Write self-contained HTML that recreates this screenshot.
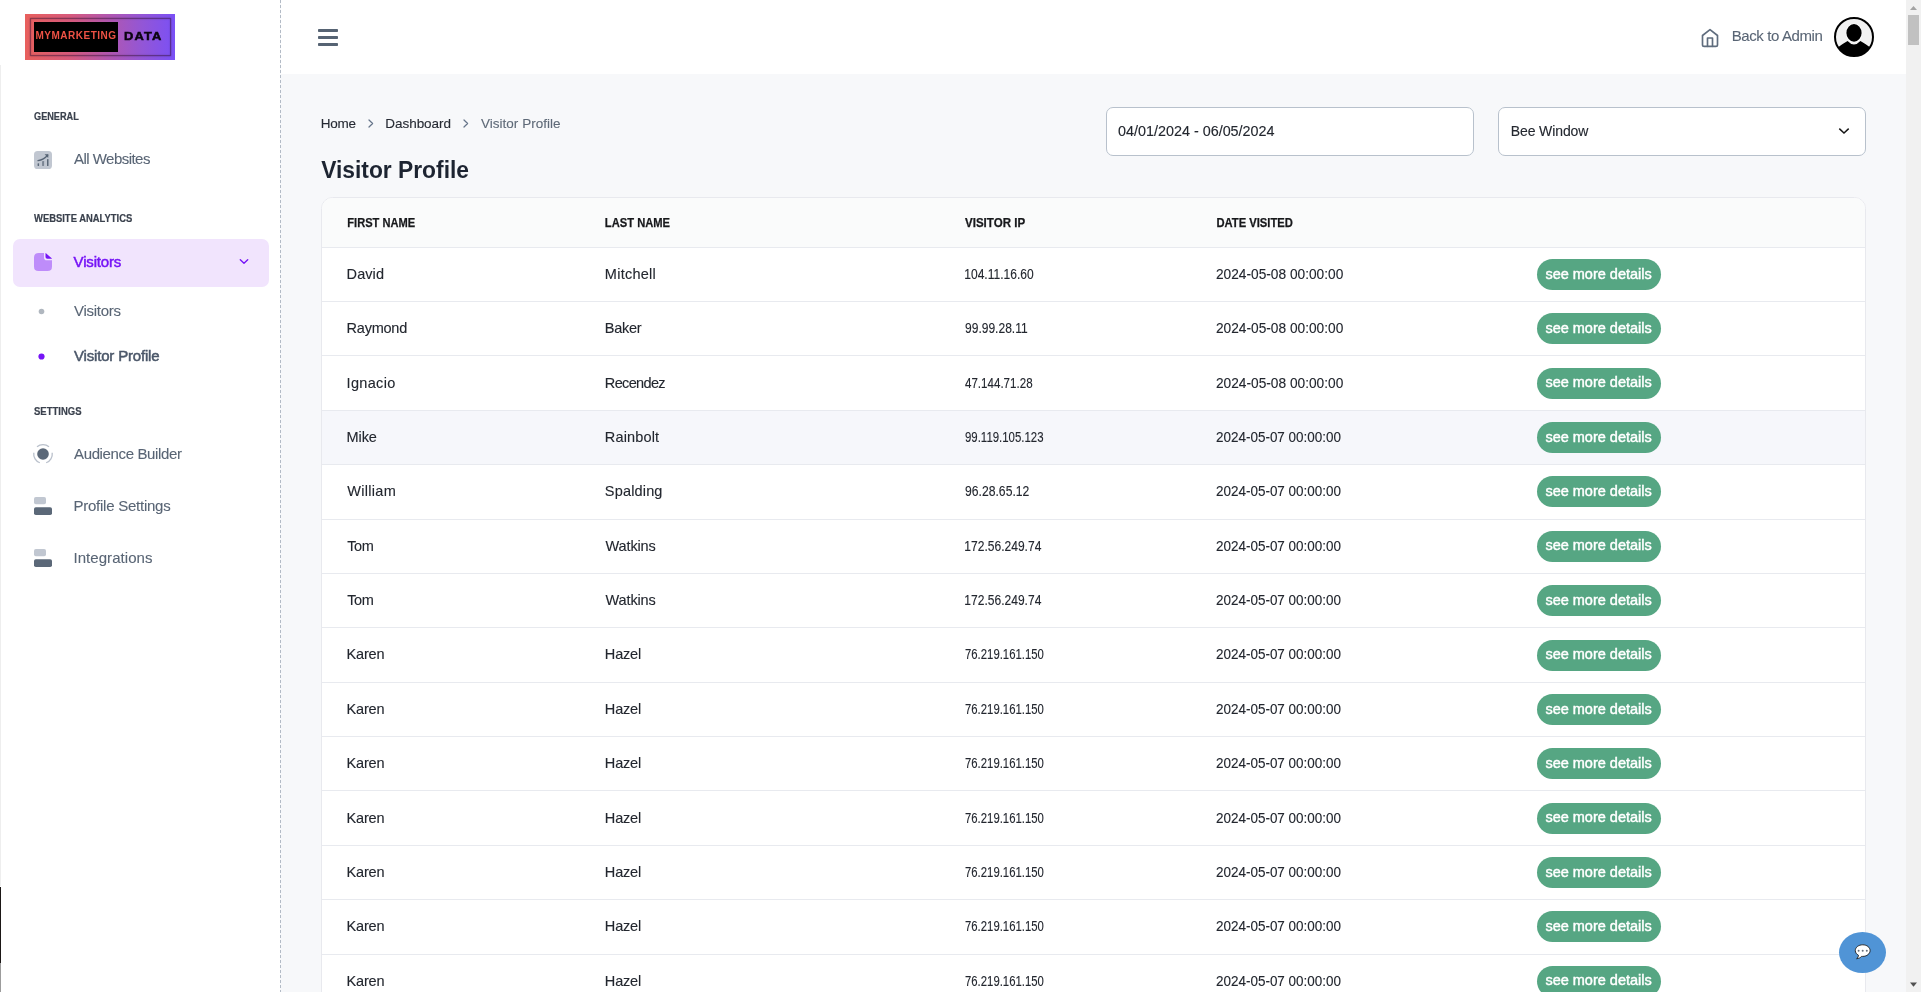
<!DOCTYPE html>
<html lang="en">
<head>
<meta charset="utf-8">
<title>Visitor Profile</title>
<style>
*{box-sizing:border-box;margin:0;padding:0}
html,body{width:1921px;height:992px;overflow:hidden}
body{position:relative;will-change:transform;background:#f7f8fa;font-family:"Liberation Sans",sans-serif;font-size:15px;color:#212529}
span{white-space:nowrap}
.t{display:inline-block;transform-origin:0 50%}
td .t{position:relative;top:-.3px}
.edge{position:absolute;left:0;top:0;width:1px;height:992px;background:linear-gradient(#fff 0,#fff 65px,#eee 65px,#eee 886px,#fff 886px,#fff 887px,#1b1716 887px,#1b1716 963px,#9c9c9c 963px)}
aside{position:absolute;left:1px;top:0;width:279px;height:992px;background:#fff}
.dash{position:absolute;left:280px;top:0;width:1px;height:992px;background:repeating-linear-gradient(#b3bbc6 0,#b3bbc6 3px,transparent 3px,transparent 5px)}
aside .abs,header .abs,main .abs,.abs{position:absolute;line-height:1;display:block}
.logo{position:absolute;left:24px;top:14px;width:150px;height:46px;background:linear-gradient(90deg,#e8605d 0%,#d75a7c 30%,#b257ae 55%,#9356d6 78%,#7a50f6 100%)}
.logo i{position:absolute;left:4.5px;top:4px;right:4.5px;bottom:4px;border:1px solid rgba(50,15,50,.5);box-shadow:0 0 1.5px rgba(50,15,50,.55),inset 0 0 1.5px rgba(50,15,50,.4);display:block}
.logo b{position:absolute;left:9px;top:8px;width:84px;height:30px;background:#000;display:block}
.logo .l1{position:absolute;color:#ee5245;line-height:1;font-weight:700;left:10.5px;top:17.4px;font-size:10px;letter-spacing:.5px}
.logo .l2{position:absolute;color:#0b0410;line-height:1;font-weight:700;left:99px;top:16.5px;font-size:11.5px;letter-spacing:1px;transform:scaleX(1.12);transform-origin:0 50%;-webkit-text-stroke:.5px}
.sec{font-size:11px;font-weight:700;color:#3a414d;-webkit-text-stroke:.2px}
.nav{font-size:15px;color:#596575;-webkit-text-stroke:.1px}
.nav.b{font-weight:400;color:#4b5769;-webkit-text-stroke:.5px}
.nav.act{font-weight:400;color:#7614f6;-webkit-text-stroke:.5px}
.active{position:absolute;left:12px;top:239px;width:256px;height:48px;border-radius:7px;background:#f1e4fd}
svg{display:block;position:absolute;overflow:visible}
header{position:absolute;left:281px;top:0;width:1625px;height:74px;background:#fff}
.hb{color:#596575;font-size:15px;-webkit-text-stroke:.1px}
main{position:absolute;left:281px;top:74px;width:1625px;height:918px}
.bc{font-size:13.5px;color:#262a33;-webkit-text-stroke:.12px}
.bc.m{color:#5e6977;-webkit-text-stroke:.1px}
h1{position:absolute;font-size:23.5px;font-weight:700;color:#1d2431;line-height:1;white-space:nowrap}
.inp{position:absolute;top:33px;width:368px;height:49px;border:1px solid #b8c1cc;border-radius:7px;background:#fff;font-size:14px;color:#23272f;-webkit-text-stroke:.12px}
.inp span{position:absolute;line-height:1}
.card{position:absolute;left:40px;top:123px;width:1545px;height:900px;border:1px solid #e8e9ee;border-radius:11.5px 11.5px 0 0;background:#fff;overflow:hidden}
table{border-collapse:separate;border-spacing:0;width:100%;table-layout:fixed}
th{height:49.7px;padding:0 0 0 25px;text-align:left;font-size:12.4px;font-weight:700;color:#17181b;-webkit-text-stroke:.25px;background:#fafbfb;border-bottom:1px solid #e8eaef;vertical-align:middle;line-height:1}

td{padding:11.2px 0 11.2px 25px;font-size:14.5px;color:#23272f;-webkit-text-stroke:.12px;border-bottom:1px solid #e8eaef;vertical-align:middle;line-height:1}

tr.hov td{background:#f6f7fb}
.btn{-webkit-text-stroke:.45px;display:block;position:relative;width:124px;height:31px;border-radius:16px;background:#56a683;color:#fff;font-size:14.5px;font-weight:400;text-align:center;line-height:31px}
.sb{position:absolute;left:1906px;top:0;width:15px;height:992px;background:#f1f1f1}
.sb .th{position:absolute;left:2px;top:15px;width:11px;height:30px;background:#c1c1c1}
.chat{position:absolute;left:1839px;top:932px;width:47px;height:41px;border-radius:50%;background:#5094d6}
</style>
</head>
<body>
<div class="edge"></div>
<aside>
<div class="logo"><i></i><b></b><span class="l1">MYMARKETING</span><span class="l2">DATA</span></div>
<span class="abs sec" style="left:33px;top:110px"><span id="t-s-gen" class="t" style="transform:translate(0.00px,1px) scaleX(0.8336)">GENERAL</span></span>
<svg style="left:33px;top:151px" width="18" height="18" viewBox="0 0 18 18"><rect width="18" height="18" rx="3.6" fill="#64748b" opacity=".4"/><rect x="3.6" y="12.2" width="1.5" height="2.8" rx=".6" fill="#5b6878"/><rect x="8.1" y="10" width="2" height="5" rx=".4" fill="#5b6878" opacity=".7"/><rect x="13" y="8" width="1.5" height="7" rx=".6" fill="#5b6878"/><path d="M4 9.6 C7.5 9 11 7.2 13.6 4.2" fill="none" stroke="#566374" stroke-width="1.3" stroke-linecap="round"/><path d="M10.6 3.3 L14.4 3.3 L14.2 7 Z" fill="#566374"/></svg>
<span class="abs nav" style="left:73px;top:152px"><span id="t-n-all" class="t" style="letter-spacing:-0.53px;transform:translate(0.00px,-1px)">All Websites</span></span>
<span class="abs sec" style="left:33px;top:212px"><span id="t-s-web" class="t" style="transform:translate(0.00px,1px) scaleX(0.8563)">WEBSITE ANALYTICS</span></span>
<div class="active"></div>
<svg style="left:33px;top:253px" width="18" height="18" viewBox="0 0 18 18"><path d="M4.6 0 H10 V4.4 Q10 7.2 12.8 7.2 H18 V13.4 Q18 18 13.4 18 H4.6 Q0 18 0 13.4 V4.6 Q0 0 4.6 0 Z" fill="#7614f6" opacity=".42"/><path d="M11.5 0.5 Q11.5 0 12 0.35 L17.7 5.3 Q18.1 5.8 17.5 5.8 H13.3 Q11.5 5.8 11.5 4 Z" fill="#7614f6"/></svg>
<span class="abs nav act" style="left:73px;top:255px"><span id="t-n-vis" class="t" style="letter-spacing:-0.16px;transform:translate(-0.42px,-1px)">Visitors</span></span>
<svg style="left:238px;top:258px" width="10" height="7" viewBox="0 0 10 7"><path d="M1.3 1.8 L5 5.2 L8.7 1.8" fill="none" stroke="#7614f6" stroke-width="1.4" stroke-linecap="round" stroke-linejoin="round"/></svg>
<svg style="left:36px;top:307px" width="9" height="9" viewBox="0 0 9 9"><circle cx="4.5" cy="4.5" r="2.8" fill="#b0b7bf"/></svg>
<span class="abs nav" style="left:73px;top:304px"><span id="t-n-vis2" class="t" style="letter-spacing:-0.27px;transform:translate(0.00px,-1px)">Visitors</span></span>
<svg style="left:36px;top:352px" width="9" height="9" viewBox="0 0 9 9"><circle cx="4.5" cy="4.5" r="3.1" fill="#7614f6"/></svg>
<span class="abs nav b" style="left:73px;top:349px"><span id="t-n-vp" class="t" style="letter-spacing:-0.18px;transform:translate(0.00px,-1px)">Visitor Profile</span></span>
<span class="abs sec" style="left:33px;top:405px"><span id="t-s-set" class="t" style="transform:translate(0.00px,1px) scaleX(0.8637)">SETTINGS</span></span>
<svg style="left:31px;top:443px" width="22" height="22" viewBox="-11 -11 22 22"><circle r="5.8" fill="#5b6878"/><g fill="none" stroke="#64748b" stroke-opacity=".45" stroke-width="1.3"><path d="M-5.98 -7.13 A9.3 9.3 0 0 1 5.98 -7.13"/><path d="M9.22 -1.21 A9.3 9.3 0 0 1 3.18 8.74"/><path d="M-3.18 8.74 A9.3 9.3 0 0 1 -9.22 -1.21"/></g></svg>
<span class="abs nav" style="left:73px;top:447px"><span id="t-n-aud" class="t" style="letter-spacing:-0.36px;transform:translate(0.00px,-1px)">Audience Builder</span></span>
<svg style="left:33px;top:497px" width="18" height="18" viewBox="0 0 18 18"><rect width="12" height="7.3" rx="1.8" fill="#64748b" opacity=".4"/><rect y="10.2" width="18" height="7.8" rx="1.8" fill="#5b6878"/></svg>
<span class="abs nav" style="left:73px;top:499px"><span id="t-n-prof" class="t" style="letter-spacing:-0.24px;transform:translate(-0.56px,-1px)">Profile Settings</span></span>
<svg style="left:33px;top:549px" width="18" height="18" viewBox="0 0 18 18"><rect width="12" height="7.3" rx="1.8" fill="#64748b" opacity=".4"/><rect y="10.2" width="18" height="7.8" rx="1.8" fill="#5b6878"/></svg>
<span class="abs nav" style="left:73px;top:551px"><span id="t-n-int" class="t" style="letter-spacing:0.06px;transform:translate(-0.56px,-1px)">Integrations</span></span>
</aside>
<div class="dash"></div>

<header>
<svg style="left:37px;top:29px" width="20" height="17" viewBox="0 0 20 17"><g fill="#566373"><rect y="0" width="20" height="3" rx=".8"/><rect y="7" width="20" height="3" rx=".8"/><rect y="14" width="20" height="3" rx=".8"/></g></svg>
<svg style="left:1419px;top:28px" width="20" height="20" viewBox="0 0 24 24" fill="none" stroke="#5f6c7d" stroke-width="2" stroke-linecap="round" stroke-linejoin="round"><path d="M3 9 L12 2 L21 9 V20 a2 2 0 0 1 -2 2 H5 a2 2 0 0 1 -2 -2 Z"/><path d="M9 22 V12 h6 V22"/></svg>
<span class="abs hb" style="left:1451px;top:29px"><span id="t-h-back" class="t" style="letter-spacing:-0.40px;transform:translate(-0.28px,-1px)">Back to Admin</span></span>
<svg style="left:1553px;top:17px" width="40" height="40" viewBox="0 0 40 40"><defs><clipPath id="av"><circle cx="20" cy="20" r="19"/></clipPath></defs><circle cx="20" cy="20" r="19" fill="#f2f2f2"/><g clip-path="url(#av)"><path d="M3 31 Q9 26.5 13.6 24 Q20 31 26.4 24 Q31 26.5 37 31 V40 H3 Z" fill="#000"/><ellipse cx="20" cy="16" rx="8.4" ry="9.6" fill="#fff"/><ellipse cx="20" cy="15.9" rx="7.6" ry="8.8" fill="#000"/></g><circle cx="20" cy="20" r="19" fill="none" stroke="#000" stroke-width="2"/></svg>
</header>

<main>
<span class="abs bc" style="left:40px;top:42px"><span id="t-b-home" class="t" style="letter-spacing:-0.27px;transform:translate(-0.28px,1px)">Home</span></span>
<svg style="left:87px;top:45px" width="6" height="9" viewBox="0 0 6 9"><path d="M1 1 L4.6 4.5 L1 8" fill="none" stroke="#66758a" stroke-width="1.25" stroke-linecap="round" stroke-linejoin="round"/></svg>
<span class="abs bc" style="left:105px;top:42px"><span id="t-b-dash" class="t" style="letter-spacing:-0.04px;transform:translate(-0.70px,1px)">Dashboard</span></span>
<svg style="left:182px;top:45px" width="6" height="9" viewBox="0 0 6 9"><path d="M1 1 L4.6 4.5 L1 8" fill="none" stroke="#66758a" stroke-width="1.25" stroke-linecap="round" stroke-linejoin="round"/></svg>
<span class="abs bc m" style="left:199px;top:42px"><span id="t-b-vp" class="t" style="letter-spacing:0.02px;transform:translate(0.98px,1px)">Visitor Profile</span></span>
<h1 style="left:40px;top:83px"><span id="t-title" class="t" style="transform:translate(0.14px,2px) scaleX(0.9704)">Visitor Profile</span></h1>
<div class="inp" style="left:825px"><span style="left:12px;top:17px"><span id="t-i-date" class="t" style="transform:translate(-0.98px,-1px) scaleX(1.0259)">04/01/2024 - 06/05/2024</span></span></div>
<div class="inp" style="left:1217px"><span style="left:12px;top:17px"><span id="t-i-sel" class="t" style="letter-spacing:-0.10px;transform:translate(-0.28px,-1px)">Bee Window</span></span><svg style="left:339px;top:19px" width="12" height="8" viewBox="0 0 12 8"><path d="M1.3 1.6 L6 6 L10.7 1.6" fill="none" stroke="#151515" stroke-width="1.45" stroke-linecap="butt" stroke-linejoin="miter"/></svg></div>

<section class="card">
<table>
<colgroup><col style="width:258px"><col style="width:360px"><col style="width:251px"><col style="width:321px"><col></colgroup>
<thead><tr><th><span id="t-th0" class="t" style="transform:translate(0.28px,1px) scaleX(0.8952)">FIRST NAME</span></th><th><span id="t-th1" class="t" style="transform:translate(-0.14px,1px) scaleX(0.9023)">LAST NAME</span></th><th><span id="t-th2" class="t" style="transform:translate(0.00px,1px) scaleX(0.9316)">VISITOR IP</span></th><th><span id="t-th3" class="t" style="transform:translate(0.42px,1px) scaleX(0.9056)">DATE VISITED</span></th><th></th></tr></thead>
<tbody>
<tr><td><span id="t-fn0" class="t" style="letter-spacing:0.08px;transform:translate(-0.42px,0px)">David</span></td><td><span id="t-ln0" class="t" style="letter-spacing:0.25px;transform:translate(-0.14px,0px)">Mitchell</span></td><td><span id="t-ip0" class="t" style="transform:translate(-0.70px,0px) scaleX(0.8296)">104.11.16.60</span></td><td><span id="t-dt0" class="t" style="transform:scaleX(0.9452)">2024-05-08 00:00:00</span></td><td><a class="btn"><span id="t-btn0" class="t" style="transform:translate(-0.42px,0px)">see more details</span></a></td></tr>
<tr><td><span id="t-fn1" class="t" style="letter-spacing:-0.24px;transform:translate(-0.42px,0px)">Raymond</span></td><td><span id="t-ln1" class="t" style="letter-spacing:-0.32px;transform:translate(-0.14px,0px)">Baker</span></td><td><span id="t-ip1" class="t" style="transform:scaleX(0.8300)">99.99.28.11</span></td><td><span id="t-dt1" class="t" style="transform:scaleX(0.9452)">2024-05-08 00:00:00</span></td><td><a class="btn"><span id="t-btn1" class="t" style="transform:translate(-0.42px,0px)">see more details</span></a></td></tr>
<tr><td><span id="t-fn2" class="t" style="letter-spacing:0.32px;transform:translate(-0.42px,0px)">Ignacio</span></td><td><span id="t-ln2" class="t" style="letter-spacing:-0.65px;transform:translate(-0.14px,0px)">Recendez</span></td><td><span id="t-ip2" class="t" style="transform:scaleX(0.7980)">47.144.71.28</span></td><td><span id="t-dt2" class="t" style="transform:scaleX(0.9452)">2024-05-08 00:00:00</span></td><td><a class="btn"><span id="t-btn2" class="t" style="transform:translate(-0.42px,0px)">see more details</span></a></td></tr>
<tr class="hov"><td><span id="t-fn3" class="t" style="letter-spacing:-0.11px;transform:translate(-0.42px,0px)">Mike</span></td><td><span id="t-ln3" class="t" style="letter-spacing:0.15px;transform:translate(-0.14px,0px)">Rainbolt</span></td><td><span id="t-ip3" class="t" style="transform:scaleX(0.7875)">99.119.105.123</span></td><td><span id="t-dt3" class="t" style="transform:scaleX(0.9283)">2024-05-07 00:00:00</span></td><td><a class="btn"><span id="t-btn3" class="t" style="transform:translate(-0.42px,0px)">see more details</span></a></td></tr>
<tr><td><span id="t-fn4" class="t" style="letter-spacing:0.29px;transform:translate(0.28px,0px)">William</span></td><td><span id="t-ln4" class="t" style="letter-spacing:0.16px;transform:translate(-0.14px,0px)">Spalding</span></td><td><span id="t-ip4" class="t" style="transform:scaleX(0.8400)">96.28.65.12</span></td><td><span id="t-dt4" class="t" style="transform:scaleX(0.9283)">2024-05-07 00:00:00</span></td><td><a class="btn"><span id="t-btn4" class="t" style="transform:translate(-0.42px,0px)">see more details</span></a></td></tr>
<tr><td><span id="t-fn5" class="t" style="letter-spacing:-0.48px;transform:translate(0.28px,0px)">Tom</span></td><td><span id="t-ln5" class="t" style="letter-spacing:-0.13px;transform:translate(0.56px,0px)">Watkins</span></td><td><span id="t-ip5" class="t" style="transform:translate(-0.70px,0px) scaleX(0.8308)">172.56.249.74</span></td><td><span id="t-dt5" class="t" style="transform:scaleX(0.9283)">2024-05-07 00:00:00</span></td><td><a class="btn"><span id="t-btn5" class="t" style="transform:translate(-0.42px,0px)">see more details</span></a></td></tr>
<tr><td><span id="t-fn6" class="t" style="letter-spacing:-0.48px;transform:translate(0.28px,0px)">Tom</span></td><td><span id="t-ln6" class="t" style="letter-spacing:-0.13px;transform:translate(0.56px,0px)">Watkins</span></td><td><span id="t-ip6" class="t" style="transform:translate(-0.70px,0px) scaleX(0.8308)">172.56.249.74</span></td><td><span id="t-dt6" class="t" style="transform:scaleX(0.9283)">2024-05-07 00:00:00</span></td><td><a class="btn"><span id="t-btn6" class="t" style="transform:translate(-0.42px,0px)">see more details</span></a></td></tr>
<tr><td><span id="t-fn7" class="t" style="letter-spacing:-0.20px;transform:translate(-0.42px,0px)">Karen</span></td><td><span id="t-ln7" class="t" style="letter-spacing:-0.20px;transform:translate(-0.14px,0px)">Hazel</span></td><td><span id="t-ip7" class="t" style="transform:scaleX(0.7826)">76.219.161.150</span></td><td><span id="t-dt7" class="t" style="transform:scaleX(0.9283)">2024-05-07 00:00:00</span></td><td><a class="btn"><span id="t-btn7" class="t" style="transform:translate(-0.42px,0px)">see more details</span></a></td></tr>
<tr><td><span id="t-fn8" class="t" style="letter-spacing:-0.20px;transform:translate(-0.42px,0px)">Karen</span></td><td><span id="t-ln8" class="t" style="letter-spacing:-0.20px;transform:translate(-0.14px,0px)">Hazel</span></td><td><span id="t-ip8" class="t" style="transform:scaleX(0.7826)">76.219.161.150</span></td><td><span id="t-dt8" class="t" style="transform:scaleX(0.9283)">2024-05-07 00:00:00</span></td><td><a class="btn"><span id="t-btn8" class="t" style="transform:translate(-0.42px,0px)">see more details</span></a></td></tr>
<tr><td><span id="t-fn9" class="t" style="letter-spacing:-0.20px;transform:translate(-0.42px,0px)">Karen</span></td><td><span id="t-ln9" class="t" style="letter-spacing:-0.20px;transform:translate(-0.14px,0px)">Hazel</span></td><td><span id="t-ip9" class="t" style="transform:scaleX(0.7826)">76.219.161.150</span></td><td><span id="t-dt9" class="t" style="transform:scaleX(0.9283)">2024-05-07 00:00:00</span></td><td><a class="btn"><span id="t-btn9" class="t" style="transform:translate(-0.42px,0px)">see more details</span></a></td></tr>
<tr><td><span id="t-fn10" class="t" style="letter-spacing:-0.20px;transform:translate(-0.42px,0px)">Karen</span></td><td><span id="t-ln10" class="t" style="letter-spacing:-0.20px;transform:translate(-0.14px,0px)">Hazel</span></td><td><span id="t-ip10" class="t" style="transform:scaleX(0.7826)">76.219.161.150</span></td><td><span id="t-dt10" class="t" style="transform:scaleX(0.9283)">2024-05-07 00:00:00</span></td><td><a class="btn"><span id="t-btn10" class="t" style="transform:translate(-0.42px,0px)">see more details</span></a></td></tr>
<tr><td><span id="t-fn11" class="t" style="letter-spacing:-0.20px;transform:translate(-0.42px,0px)">Karen</span></td><td><span id="t-ln11" class="t" style="letter-spacing:-0.20px;transform:translate(-0.14px,0px)">Hazel</span></td><td><span id="t-ip11" class="t" style="transform:scaleX(0.7826)">76.219.161.150</span></td><td><span id="t-dt11" class="t" style="transform:scaleX(0.9283)">2024-05-07 00:00:00</span></td><td><a class="btn"><span id="t-btn11" class="t" style="transform:translate(-0.42px,0px)">see more details</span></a></td></tr>
<tr><td><span id="t-fn12" class="t" style="letter-spacing:-0.20px;transform:translate(-0.42px,0px)">Karen</span></td><td><span id="t-ln12" class="t" style="letter-spacing:-0.20px;transform:translate(-0.14px,0px)">Hazel</span></td><td><span id="t-ip12" class="t" style="transform:scaleX(0.7826)">76.219.161.150</span></td><td><span id="t-dt12" class="t" style="transform:scaleX(0.9283)">2024-05-07 00:00:00</span></td><td><a class="btn"><span id="t-btn12" class="t" style="transform:translate(-0.42px,0px)">see more details</span></a></td></tr>
<tr><td><span id="t-fn13" class="t" style="letter-spacing:-0.20px;transform:translate(-0.42px,0px)">Karen</span></td><td><span id="t-ln13" class="t" style="letter-spacing:-0.20px;transform:translate(-0.14px,0px)">Hazel</span></td><td><span id="t-ip13" class="t" style="transform:scaleX(0.7826)">76.219.161.150</span></td><td><span id="t-dt13" class="t" style="transform:scaleX(0.9283)">2024-05-07 00:00:00</span></td><td><a class="btn"><span id="t-btn13" class="t" style="transform:translate(-0.42px,0px)">see more details</span></a></td></tr>
</tbody>
</table>
</section>
</main>

<div class="sb"><svg style="left:0;top:0" width="15" height="15" viewBox="0 0 15 15"><path d="M4 10 L7.5 6 L11 10 Z" fill="#a3a3a3"/></svg><div class="th"></div><svg style="left:0;top:977px" width="15" height="15" viewBox="0 0 15 15"><path d="M4 5.5 L7.5 9.7 L11 5.5 Z" fill="#505050"/></svg></div>
<div class="chat"><svg style="left:15px;top:12px" width="17" height="16" viewBox="0 0 17 16"><path d="M8.7 0.8 C4.6 0.8 1.3 3.3 1.3 6.6 C1.3 8.6 2.6 10.3 4.5 11.3 C4.4 12.6 3.7 13.8 2.6 14.7 C4.9 14.5 6.6 13.6 7.6 12.4 C8 12.4 8.3 12.4 8.7 12.4 C12.8 12.4 16.1 9.8 16.1 6.6 C16.1 3.3 12.8 0.8 8.7 0.8 Z" fill="#fff" stroke="#1a1a1a" stroke-width=".9"/><g fill="#66707c"><circle cx="4.6" cy="6.8" r="1"/><circle cx="8.7" cy="6.8" r="1"/><circle cx="12.8" cy="6.8" r="1"/></g></svg></div>

</body>
</html>
